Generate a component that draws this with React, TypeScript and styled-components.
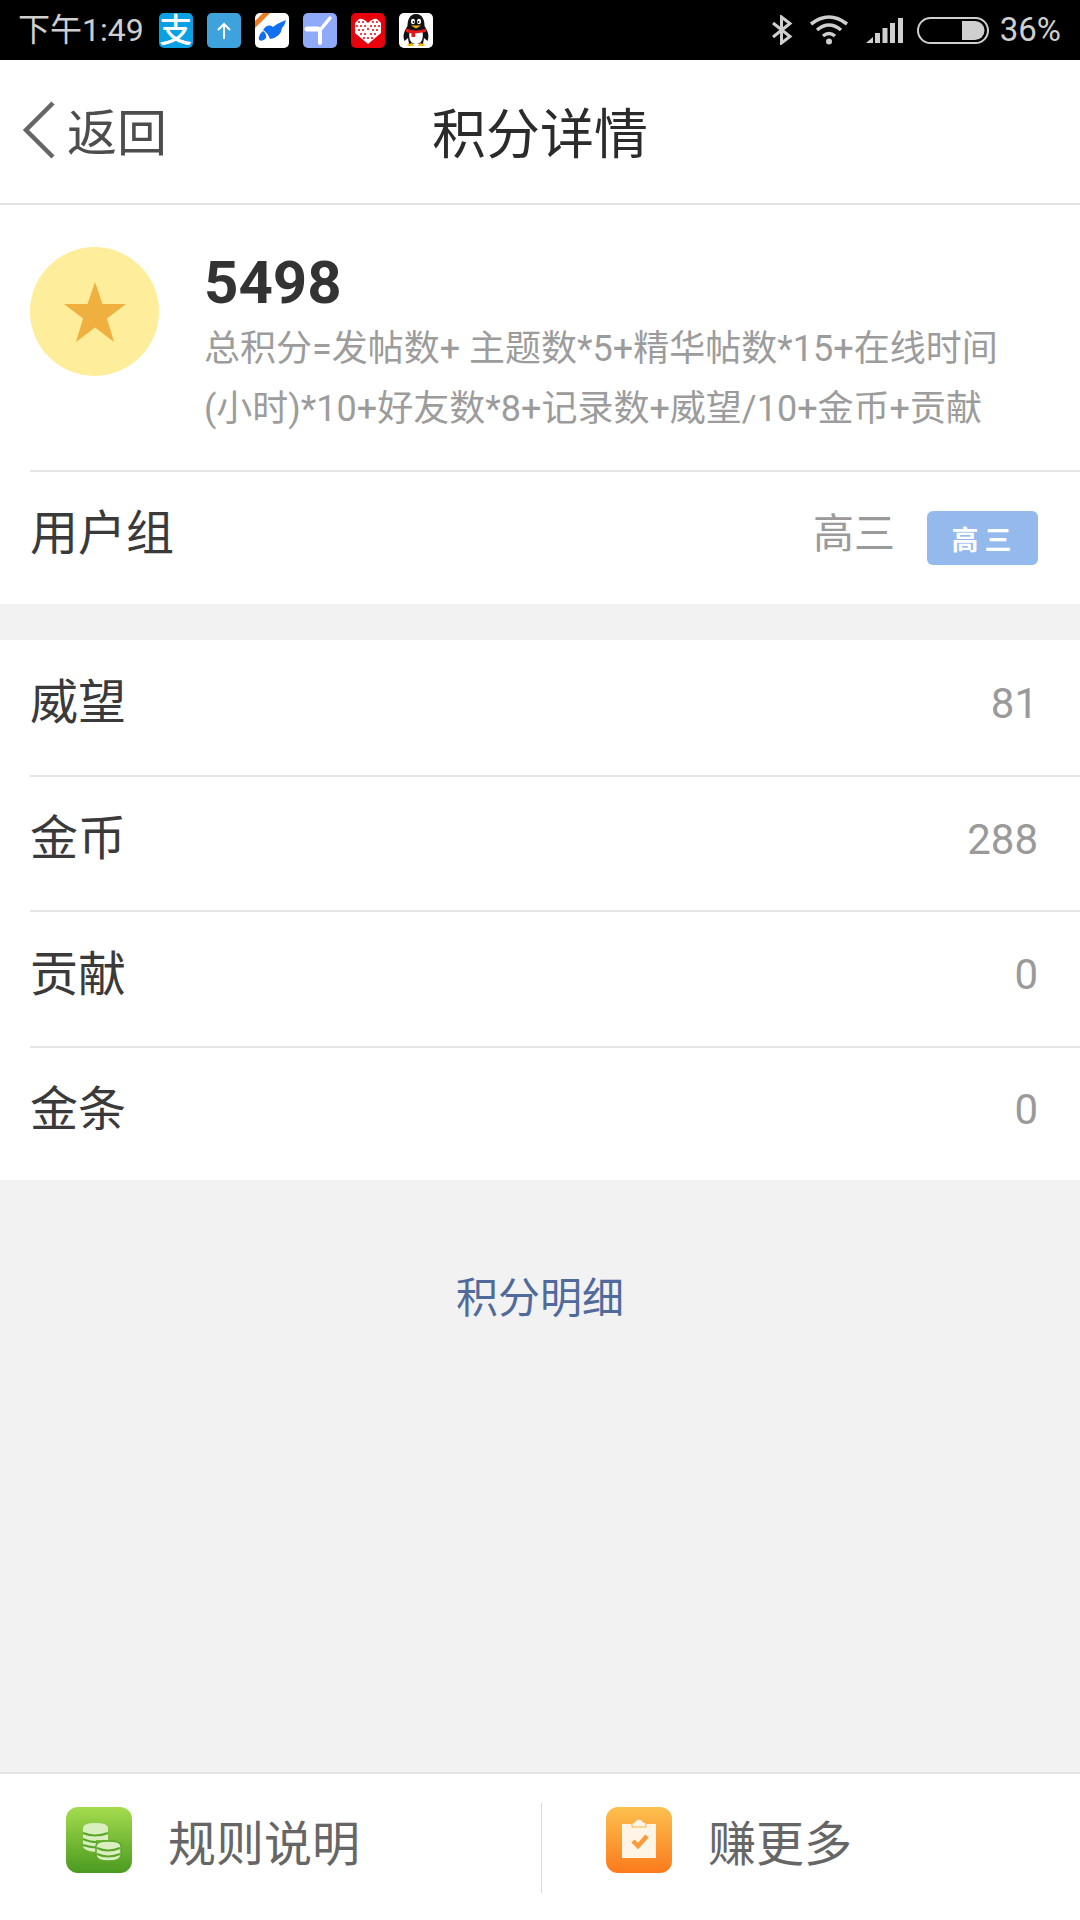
import React from "react";
import styled, {createGlobalStyle} from "styled-components";

const GlobalStyle = createGlobalStyle`
  html, body {
    margin: 0;
    padding: 0;
    background: #f2f2f2;
  }
  * {
    box-sizing: border-box;
  }
  body {
    font-family: Roboto, "Noto Sans CJK SC", sans-serif;
  }
`;

const Page = styled.div`
  display: flex;
  flex-direction: column;
  width: 1080px;
  height: 1920px;
  overflow: hidden;
  background-color: #f2f2f2;
`;

const StatusBar = styled.div`
  display: flex;
  align-items: center;
  flex: none;
  height: 60px;
  padding: 0 19px 0 18px;
  background-color: #000;
  color: #cfcfcf;
`;

const StatusTime = styled.div`
  flex: none;
  margin-right: 15px;
  font-size: 32px;
  line-height: 46px;
  white-space: nowrap;
`;

const AppIcons = styled.div`
  display: flex;
  gap: 14px;
`;

const AppIcon = styled.div<{$bg: string}>`
  position: relative;
  display: flex;
  align-items: center;
  justify-content: center;
  width: 34px;
  height: 35px;
  border-radius: 5px;
  background-color: ${(p) => p.$bg};
  color: #fff;
  svg {
    display: block;
  }
`;

const AlipayGlyph = styled.span`
  font-size: 33px;
  line-height: 35px;
  font-weight: 500;
`;

const StatusRight = styled.div`
  display: flex;
  align-items: center;
  margin-left: auto;
`;

const StatusPercent = styled.div`
  margin-left: 11px;
  font-size: 33px;
  line-height: 46px;
`;

const Header = styled.div`
  position: relative;
  display: flex;
  align-items: center;
  justify-content: center;
  flex: none;
  height: 145px;
  padding-bottom: 3px;
  background-color: #fff;
  border-bottom: 2px solid #e2e2e2;
`;

const BackButton = styled.div`
  position: absolute;
  left: 22px;
  top: 0;
  bottom: 3px;
  display: flex;
  align-items: center;
  gap: 11px;
  font-size: 50px;
  color: #4d4d4d;
`;

const BackLabel = styled.span`
  margin-top: 7px;
  line-height: 60px;
`;

const Title = styled.div`
  font-size: 54px;
  color: #2b2b2b;
`;

const Card = styled.div`
  flex: none;
  background-color: #fff;
`;

const ScoreBlock = styled.div`
  display: flex;
  height: 265px;
  padding: 42px 0 0 30px;
`;

const Coin = styled.div`
  display: flex;
  align-items: center;
  justify-content: center;
  flex: none;
  width: 129px;
  height: 129px;
  border-radius: 50%;
  background-color: #feee9b;
`;

const ScoreText = styled.div`
  display: flex;
  flex-direction: column;
  margin: 2px 0 0 45px;
`;

const ScoreValue = styled.div`
  font-size: 60px;
  line-height: 68px;
  font-weight: 700;
  color: #333;
`;

const ScoreFormula = styled.div`
  width: 810px;
  margin-top: 2px;
  font-size: 36px;
  line-height: 60px;
  color: #9c9c9c;
`;

const Row = styled.div<{$height: number; $divider?: boolean}>`
  position: relative;
  display: flex;
  align-items: center;
  height: ${(p) => p.$height}px;
  margin-left: 30px;
  padding: 0 42px 9px 0;
  border-top: ${(p) => (p.$divider ? "2px solid #e6e6e6" : "none")};
`;

const RowLabel = styled.div`
  margin-bottom: 10px;
  font-size: 48px;
  color: #3a3a3a;
`;

const RowValue = styled.div`
  margin-left: auto;
  font-size: 42px;
  color: #9a9a9a;
`;

const GradeBadge = styled.div`
  display: flex;
  align-items: center;
  justify-content: center;
  width: 111px;
  height: 54px;
  margin: 9px 0 0 32px;
  padding-left: 4px;
  border-radius: 6px;
  background-color: #94b9ec;
  color: #fff;
  font-size: 27px;
  font-weight: 700;
  letter-spacing: 6px;
`;

const GroupValue = styled(RowValue)`
  position: relative;
  top: -4px;
  font-size: 41px;
`;

const Gap = styled.div`
  flex: none;
  height: 36px;
`;

const DetailLink = styled.div`
  flex: none;
  margin-top: 89px;
  text-align: center;
  font-size: 42px;
  line-height: 60px;
  color: #506a9b;
`;

const BottomBar = styled.div`
  display: flex;
  align-items: center;
  flex: none;
  height: 148px;
  margin-top: auto;
  background-color: #fff;
  border-top: 2px solid #e4e4e4;
`;

const BottomItem = styled.div<{$left: number; $width: number}>`
  display: flex;
  align-items: center;
  gap: 36px;
  width: ${(p) => p.$width}px;
  height: 90px;
  padding: 0 0 14px ${(p) => p.$left}px;
`;

const BottomDivider = styled.div`
  flex: none;
  width: 1px;
  height: 90px;
  margin-top: 2px;
  background-color: #dcdcdc;
`;

const BottomIcon = styled.div<{$from: string; $to: string}>`
  display: flex;
  align-items: center;
  justify-content: center;
  flex: none;
  width: 66px;
  height: 66px;
  border-radius: 12px;
  background: linear-gradient(${(p) => p.$from}, ${(p) => p.$to});
`;

const BottomLabel = styled.div`
  font-size: 48px;
  color: #666;
`;

const BluetoothIcon = () => (
    <svg width="22" height="30" viewBox="0 0 22 30" fill="none" stroke="#cfcfcf" strokeWidth="3">
        <path d="M2 8 L19 21.5 L10.500 28 V2 L19 8.500 L2 22" />
    </svg>
);

const WifiIcon = () => (
    <svg width="40" height="30" viewBox="0 0 40 30" fill="none" stroke="#cfcfcf" strokeWidth="3.5" style={{marginLeft: 16}}>
        <path d="M2 9 Q20 -5 38 9" />
        <path d="M8 15 Q20 5 32 15" />
        <path d="M14 21 Q20 16 26 21" />
        <circle cx="20" cy="26.500" r="3" fill="#cfcfcf" stroke="none" />
    </svg>
);

const SignalIcon = () => (
    <svg width="38" height="26" viewBox="0 0 38 26" fill="#cfcfcf" style={{marginLeft: 17, marginTop: 2}}>
        <path d="M0 25 L7 19 V25 Z" />
        <rect x="9" y="15" width="5" height="10" />
        <rect x="16.500" y="10" width="5" height="15" />
        <rect x="24" y="5" width="5" height="20" />
        <rect x="32" y="0" width="5" height="25" />
    </svg>
);

const BatteryIcon = () => (
    <svg width="72" height="27" viewBox="0 0 72 27" style={{marginLeft: 13}}>
        <rect x="1" y="1" width="70" height="25" rx="12.500" fill="none" stroke="#cfcfcf" strokeWidth="2" />
        <path d="M45 4 H58 A9.500 9.500 0 0 1 58 23 H45 Z" fill="#cfcfcf" />
    </svg>
);

const UploadIcon = () => (
    <svg width="34" height="35" viewBox="0 0 34 35" fill="none" stroke="#fff" strokeWidth="2">
        <path d="M17 26 V11 M11 17 L17 11 L23 17" />
    </svg>
);

const BirdIcon = () => (
    <svg width="34" height="35" viewBox="0 0 34 35">
        <path d="M4 27 Q3 22 8 18 Q12 21 11 25 Q8 29 4 27 Z" fill="#1170f0" />
        <path d="M8 17 Q13 10 18 14 Q21 11 31 7 Q30 12 27 15 Q26 24 15 26 Q13 20 8 17 Z" fill="#1170f0" />
        <path d="M0 8 L8 0 H15 L0 15 Z" fill="#ee7a22" />
    </svg>
);

const FanIcon = () => (
    <svg width="34" height="35" viewBox="0 0 34 35" fill="none" stroke="#fff" strokeLinecap="round">
        <path d="M4 16 H15" strokeWidth="5" />
        <path d="M18 16 L27 5" strokeWidth="3.500" />
        <path d="M17 17 V30" strokeWidth="4" />
    </svg>
);

const heartDots = [
    [8, 9], [12, 9], [22, 9], [26, 9], [6, 13], [10, 13], [14, 13], [20, 13], [24, 13], [28, 13],
    [8, 17], [12, 17], [17, 16], [22, 17], [26, 17], [10, 21], [14, 21], [20, 21], [24, 21], [13, 25], [17, 25], [21, 25],
];

const HeartIcon = () => (
    <svg width="34" height="35" viewBox="0 0 34 35">
        <path d="M17 10 Q12 5 8 6 L4 10 V20 L17 31 L30 20 V10 L26 6 Q22 5 17 10 Z" fill="#fff" />
        {heartDots.map(([x, y]) => (
            <circle key={`${x}-${y}`} cx={x} cy={y} r="1" fill="#e8000c" />
        ))}
    </svg>
);

const PenguinIcon = () => (
    <svg width="34" height="35" viewBox="0 0 34 35">
        <path d="M17 1 C10 1 8.500 8 8.500 13 C6 17 3 22 5.500 28 L9 25 L10 31 H24 L25 25 L28.500 28 C31 22 28 17 25.500 13 C25.500 8 24 1 17 1 Z" fill="#111" />
        <path d="M10.500 19 C9.500 25 11 31 17 31 C23 31 24.500 25 23.500 19 Z" fill="#fff" />
        <ellipse cx="14" cy="8.500" rx="2" ry="2.800" fill="#fff" />
        <ellipse cx="20" cy="8.500" rx="2" ry="2.800" fill="#fff" />
        <circle cx="14.500" cy="9" r="0.900" fill="#111" />
        <circle cx="19.500" cy="9" r="0.900" fill="#111" />
        <path d="M12 12.500 H22 L17 15.500 Z" fill="#f6b400" />
        <path d="M7 15.500 Q17 19.500 27 15.500 L27 19 L16 20.500 L16 24 L12.500 24 L12.500 20.500 L7 19 Z" fill="#e5191c" />
        <path d="M8 31.500 L13 30 L15 33 H9 Z M26 31.500 L21 30 L19 33 H25 Z" fill="#f6b400" />
    </svg>
);

const CoinsIcon = () => (
    <svg width="66" height="66" viewBox="0 0 66 66">
        <path d="M17 21 Q17 16 29.500 16 Q42 16 42 21 V33 H30 V45 Q17 44 17 39 Z" fill="#d9efc0" />
        <path d="M17 26 Q29 31 42 26 M17 32 Q23 35 31 35 M17 38 Q23 40 30 40.500" fill="none" stroke="#5da62c" strokeWidth="2" />
        <path d="M30 39 Q30 34 42.500 34 Q55 34 55 39 V48 Q55 54 42.500 54 Q30 54 30 48 Z" fill="#d9efc0" stroke="#5da62c" strokeWidth="1.500" />
        <path d="M31 41 Q42 46 54 41 M31 47 Q42 52 54 47" fill="none" stroke="#5da62c" strokeWidth="2" />
    </svg>
);

const ClipboardIcon = () => (
    <svg width="66" height="66" viewBox="0 0 66 66">
        <path d="M16 17 H50 V51 H16 Z" fill="#fff5e6" />
        <path d="M26 17 Q26 15 29 15 Q30 12 33 12 Q36 12 37 15 Q40 15 40 17 V20 H26 Z" fill="#fff5e6" stroke="#fbb045" strokeWidth="1" />
        <path d="M27 34 L32 39 L41 29" fill="none" stroke="#fa9a3a" strokeWidth="4.500" />
    </svg>
);

const rows = [
    {label: "威望", value: "81", height: 135},
    {label: "金币", value: "288", height: 135},
    {label: "贡献", value: "0", height: 136},
    {label: "金条", value: "0", height: 134},
];

export default function App() {
    return (
        <Page>
            <GlobalStyle />
            <StatusBar>
                <StatusTime>下午1:49</StatusTime>
                <AppIcons>
                    <AppIcon $bg="#0aa0e4"><AlipayGlyph>支</AlipayGlyph></AppIcon>
                    <AppIcon $bg="#3ea3dc"><UploadIcon /></AppIcon>
                    <AppIcon $bg="#fff"><BirdIcon /></AppIcon>
                    <AppIcon $bg="#8faaf8"><FanIcon /></AppIcon>
                    <AppIcon $bg="#e8000c"><HeartIcon /></AppIcon>
                    <AppIcon $bg="#fff"><PenguinIcon /></AppIcon>
                </AppIcons>
                <StatusRight>
                    <BluetoothIcon />
                    <WifiIcon />
                    <SignalIcon />
                    <BatteryIcon />
                    <StatusPercent>36%</StatusPercent>
                </StatusRight>
            </StatusBar>

            <Header>
                <BackButton>
                    <svg width="34" height="58" viewBox="0 0 34 58" fill="none" stroke="#666" strokeWidth="4.500">
                        <path d="M31 2 L4 29 L31 56" />
                    </svg>
                    <BackLabel>返回</BackLabel>
                </BackButton>
                <Title>积分详情</Title>
            </Header>

            <Card>
                <ScoreBlock>
                    <Coin>
                        <svg width="62" height="60" viewBox="0 0 62 60">
                            <path d="M31 0 L38.500 22 L62 22 L43 36.500 L50 60 L31 45.500 L12 60 L19 36.500 L0 22 L23.500 22 Z" fill="#f0b040" />
                        </svg>
                    </Coin>
                    <ScoreText>
                        <ScoreValue>5498</ScoreValue>
                        <ScoreFormula>总积分=发帖数+ 主题数*5+精华帖数*15+在线时间(小时)*10+好友数*8+记录数+威望/10+金币+贡献</ScoreFormula>
                    </ScoreText>
                </ScoreBlock>
                <Row $height={134} $divider>
                    <RowLabel>用户组</RowLabel>
                    <GroupValue>高三</GroupValue>
                    <GradeBadge>高三</GradeBadge>
                </Row>
            </Card>

            <Gap />

            <Card>
                {rows.map((row, index) => (
                    <Row key={row.label} $height={row.height} $divider={index > 0}>
                        <RowLabel>{row.label}</RowLabel>
                        <RowValue>{row.value}</RowValue>
                    </Row>
                ))}
            </Card>

            <DetailLink>积分明细</DetailLink>

            <BottomBar>
                <BottomItem $left={66} $width={541}>
                    <BottomIcon $from="#a5dc4e" $to="#4a9a20"><CoinsIcon /></BottomIcon>
                    <BottomLabel>规则说明</BottomLabel>
                </BottomItem>
                <BottomDivider />
                <BottomItem $left={64} $width={538}>
                    <BottomIcon $from="#fcc04e" $to="#fb7a1c"><ClipboardIcon /></BottomIcon>
                    <BottomLabel>赚更多</BottomLabel>
                </BottomItem>
            </BottomBar>
        </Page>
    );
}
